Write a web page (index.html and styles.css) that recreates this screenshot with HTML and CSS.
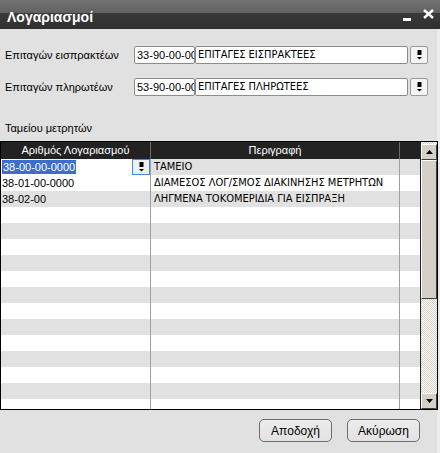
FILE: index.html
```html
<!DOCTYPE html>
<html lang="el">
<head>
<meta charset="utf-8">
<link rel="stylesheet" href="styles.css">
</head>
<body>
<div class="window">
  <div class="titlebar">
    <span class="title">Λογαριασμοί</span>
    <div class="controls">
      <span class="min"></span>
      <svg class="close" width="11" height="10" viewBox="0 0 11 10"><path d="M1 1 L10 9 M10 1 L1 9" stroke="#fff" stroke-width="2.4"/></svg>
    </div>
  </div>
  <div class="content">
    <div class="field">
      <span class="label">Επιταγών εισπρακτέων</span>
      <div class="inp code">33-90-00-0000</div>
      <div class="inp desc caps">ΕΠΙΤΑΓΕΣ ΕΙΣΠΡΑΚΤΕΕΣ</div>
      <div class="ddbtn"><svg width="7" height="10" viewBox="0 0 7 10"><rect x="1.5" y="0" width="4" height="5" fill="#000"/><path d="M1 7 H6 L3.5 9.5 Z" fill="#000"/></svg></div>
    </div>
    <div class="field">
      <span class="label">Επιταγών πληρωτέων</span>
      <div class="inp code">53-90-00-0000</div>
      <div class="inp desc caps">ΕΠΙΤΑΓΕΣ ΠΛΗΡΩΤΕΕΣ</div>
      <div class="ddbtn"><svg width="7" height="10" viewBox="0 0 7 10"><rect x="1.5" y="0" width="4" height="5" fill="#000"/><path d="M1 7 H6 L3.5 9.5 Z" fill="#000"/></svg></div>
    </div>
    <div class="section">Ταμείου μετρητών</div>
    <div class="grid">
      <div class="table">
        <div class="hdr">
          <div class="c1">Αριθμός Λογαριασμού</div>
          <div class="c2">Περιγραφή</div>
          <div class="c3"></div>
        </div>
        <div class="row even">
          <div class="c1 editor"><span class="sel">38-00-00-0000</span><span class="edbtn"><svg width="7" height="10" viewBox="0 0 7 10"><rect x="1.5" y="0" width="4" height="5" fill="#000"/><path d="M1 7 H6 L3.5 9.5 Z" fill="#000"/></svg></span></div>
          <div class="c2 caps">ΤΑΜΕΙΟ</div>
          <div class="c3"></div>
        </div>
        <div class="row">
          <div class="c1">38-01-00-0000</div>
          <div class="c2 caps">ΔΙΑΜΕΣΟΣ ΛΟΓ/ΣΜΟΣ ΔΙΑΚΙΝΗΣΗΣ ΜΕΤΡΗΤΩΝ</div>
          <div class="c3"></div>
        </div>
        <div class="row even">
          <div class="c1">38-02-00</div>
          <div class="c2 caps">ΛΗΓΜΕΝΑ ΤΟΚΟΜΕΡΙΔΙΑ ΓΙΑ ΕΙΣΠΡΑΞΗ</div>
          <div class="c3"></div>
        </div>
        <div class="row"><div class="c1"></div><div class="c2"></div><div class="c3"></div></div>
        <div class="row even"><div class="c1"></div><div class="c2"></div><div class="c3"></div></div>
        <div class="row"><div class="c1"></div><div class="c2"></div><div class="c3"></div></div>
        <div class="row even"><div class="c1"></div><div class="c2"></div><div class="c3"></div></div>
        <div class="row"><div class="c1"></div><div class="c2"></div><div class="c3"></div></div>
        <div class="row even"><div class="c1"></div><div class="c2"></div><div class="c3"></div></div>
        <div class="row"><div class="c1"></div><div class="c2"></div><div class="c3"></div></div>
        <div class="row even"><div class="c1"></div><div class="c2"></div><div class="c3"></div></div>
        <div class="row"><div class="c1"></div><div class="c2"></div><div class="c3"></div></div>
        <div class="row even"><div class="c1"></div><div class="c2"></div><div class="c3"></div></div>
        <div class="row"><div class="c1"></div><div class="c2"></div><div class="c3"></div></div>
        <div class="row even"><div class="c1"></div><div class="c2"></div><div class="c3"></div></div>
        <div class="row"><div class="c1"></div><div class="c2"></div><div class="c3"></div></div>
      </div>
      <div class="scrollbar">
        <div class="sbtn"><svg width="7" height="4" viewBox="0 0 7 4"><path d="M0 4 L3.5 0 L7 4 Z" fill="#000"/></svg></div>
        <div class="thumb"></div>
        <div class="track"></div>
        <div class="sbtn"><svg width="7" height="4" viewBox="0 0 7 4"><path d="M0 0 L7 0 L3.5 4 Z" fill="#000"/></svg></div>
      </div>
    </div>
    <div class="buttons">
      <button class="btn">Αποδοχή</button>
      <button class="btn">Ακύρωση</button>
    </div>
  </div>
</div>
</body>
</html>
```
FILE: styles.css
```css
html, body {
  margin: 0;
  padding: 0;
  background: #e1e1e1;
}
.window {
  width: 440px;
  height: 453px;
  display: flex;
  flex-direction: column;
  font-family: "Liberation Sans", Arial, sans-serif;
  font-size: 11px;
  color: #000;
  overflow: hidden;
}
.titlebar {
  height: 29px;
  flex: none;
  display: flex;
  align-items: center;
  justify-content: space-between;
  padding: 0 6px 0 7px;
  background: linear-gradient(to bottom, #737373 0, #616161 13px, #3a3a3a 13px, #2f2f2f 29px);
  color: #fff;
}
.title {
  font-weight: bold;
  font-size: 14px;
  padding-top: 4px;
}
.controls {
  display: flex;
  align-items: flex-start;
  gap: 12px;
  height: 29px;
}
.min {
  width: 8px;
  height: 3px;
  background: #fff;
  margin-top: 18px;
}
.close {
  margin-top: 9px;
}
.content {
  flex: 1;
  display: flex;
  flex-direction: column;
  border-right: 3px solid #ececec;
}
.field {
  display: flex;
  align-items: center;
  height: 18px;
  margin-top: 17px;
}
.field + .field {
  margin-top: 14px;
}
.label {
  width: 129px;
  padding-left: 5px;
  flex: none;
}
.inp {
  height: 16px;
  line-height: 16px;
  background: #fff;
  border: 1px solid #8c8c8c;
  border-radius: 2px;
  padding: 0 1px 0 2px;
  overflow: hidden;
  white-space: nowrap;
  box-sizing: content-box;
}
.code {
  width: 56px;
}
.desc {
  width: 208px;
}
.caps {
  font-family: "Liberation Sans Narrow", "DejaVu Sans Condensed", "Liberation Sans", sans-serif;
  font-stretch: condensed;
  font-size: 11px;
}
.ddbtn {
  width: 16px;
  height: 16px;
  margin-left: 2px;
  border: 1px solid #9a9a9a;
  border-radius: 2px;
  background: #f4f4f4;
  display: flex;
  align-items: center;
  justify-content: center;
}
.section {
  margin-top: 26px;
  padding-left: 5px;
  height: 14px;
}
.grid {
  margin-top: 5px;
  width: 436px;
  height: 267px;
  border: 1px solid #000;
  display: flex;
  background: #222;
}
.table {
  flex: 1;
  display: flex;
  flex-direction: column;
  overflow: hidden;
  background: #fff;
}
.hdr, .row {
  display: flex;
  flex: none;
}
.hdr {
  height: 17px;
  background: #222;
  color: #fff;
}
.hdr > div {
  text-align: center;
  line-height: 17px;
}
.row {
  height: 16px;
  line-height: 16px;
  background: #fff;
}
.row.even {
  background: #e1e1e1;
}
.c1 {
  width: 150px;
  border-right: 1px solid #a0a0a0;
  padding-left: 1px;
  box-sizing: border-box;
  flex: none;
  white-space: nowrap;
  overflow: hidden;
}
.c2 {
  width: 249px;
  border-right: 1px solid #a0a0a0;
  padding-left: 3px;
  box-sizing: border-box;
  flex: none;
  white-space: nowrap;
  overflow: hidden;
}
.c3 {
  flex: 1;
}
.hdr .c1, .hdr .c2 {
  padding: 0;
  border-right-color: #6a6a6a;
}
.editor {
  background: #fff;
  display: flex;
  justify-content: space-between;
  padding-left: 1px;
}
.sel {
  background: #3a6fcf;
  color: #fff;
  height: 14px;
  line-height: 14px;
  margin-top: 1px;
  padding: 0 1px;
}
.edbtn {
  width: 16px;
  height: 14px;
  border: 1px solid #3d8ce0;
  background: #efefef;
  display: flex;
  align-items: center;
  justify-content: center;
}
.scrollbar {
  width: 16px;
  flex: none;
  display: flex;
  flex-direction: column;
  border-left: 1px solid #222;
  background: repeating-conic-gradient(#d4d0c8 0 25%, #ffffff 0 50%) 0 0 / 2px 2px;
}
.sbtn {
  height: 16px;
  flex: none;
  box-sizing: border-box;
  background: #d4d0c8;
  border: 1px solid;
  border-color: #fff #404040 #404040 #fff;
  display: flex;
  align-items: center;
  justify-content: center;
}
.sbtn:first-child {
  margin-top: 2px;
}
.thumb {
  height: 139px;
  flex: none;
  box-sizing: border-box;
  background: #d4d0c8;
  border: 1px solid;
  border-color: #fff #404040 #404040 #fff;
}
.track {
  flex: 1;
}
.buttons {
  display: flex;
  justify-content: flex-end;
  gap: 15px;
  padding-right: 17px;
  margin-top: 9px;
}
.btn {
  width: 73px;
  height: 23px;
  font-family: "Liberation Sans", Arial, sans-serif;
  font-size: 12px;
  color: #000;
  background: linear-gradient(#ececec, #e2e2e2);
  border: 1px solid #6e6e6e;
  border-radius: 5px;
  padding: 0;
}
```
